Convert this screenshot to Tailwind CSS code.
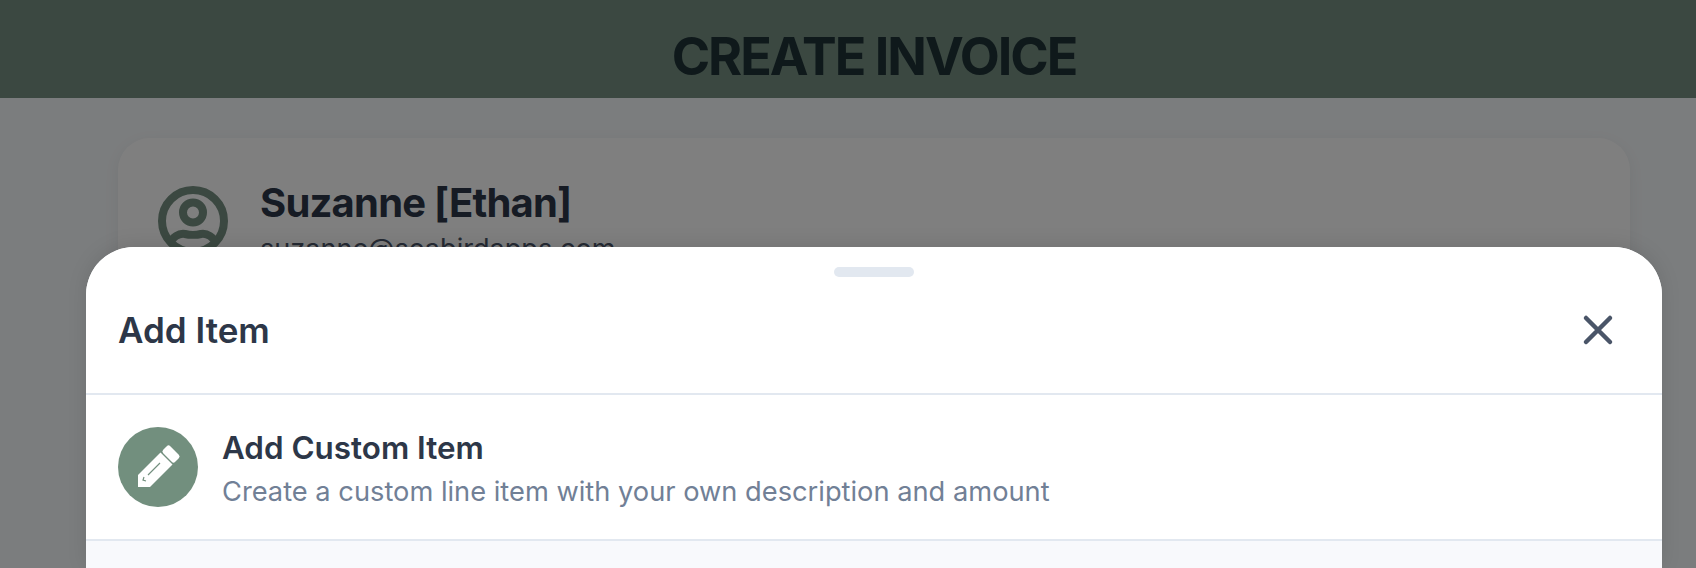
<!DOCTYPE html>
<html>
<head>
<meta charset="utf-8">
<script src="https://cdn.jsdelivr.net/npm/@tailwindcss/browser@4"></script>
</head>
<body class="overflow-hidden bg-[#f7fafc] font-['Inter',sans-serif]">
<div class="relative h-[568px] w-[1748px] overflow-hidden bg-[#f7fafc]">
  <header class="flex h-[98px] items-center justify-center bg-[#769082] pt-[15px]">
    <h1 class="text-[52px] leading-none font-bold tracking-[-2px] text-[#1e3236]">CREATE INVOICE</h1>
  </header>
  <main class="px-[118px] pt-10">
    <section class="flex h-[300px] gap-8 rounded-[32px] bg-white px-10 pt-12 shadow-[0_4px_16px_rgba(0,0,0,0.06)]">
      <svg class="h-[70px] w-[70px] shrink-0" viewBox="0 0 70 70" fill="none" stroke="#769082" stroke-width="8">
        <circle cx="35" cy="35" r="31"/>
        <circle cx="35" cy="26.5" r="10"/>
        <path d="M12 58C14 51 21 47 27 48C31 49 39 49 43 48C49 47 56 51 58 58"/>
      </svg>
      <div class="-mt-[5px]">
        <p class="text-[40px] leading-[44px] font-bold tracking-[-0.8px] text-[#2d3748]">Suzanne [Ethan]</p>
        <p class="mt-[6px] text-[27.1px] leading-9 text-[#4a5568]">suzanne@seabirdapps.com</p>
      </div>
    </section>
  </main>
  <div class="absolute inset-0 bg-black/50"></div>
  <div class="absolute top-[247px] bottom-0 left-[86px] w-[1576px] overflow-hidden rounded-t-[48px] bg-[#f8f9fc] shadow-[0_-2px_20px_rgba(0,0,0,0.1)]">
    <div class="bg-white">
      <div class="flex justify-center pt-5">
        <div class="h-2.5 w-20 rounded-full bg-[#e2e8f0]"></div>
      </div>
      <div class="flex h-[118px] items-center justify-between border-b-2 border-[#e2e8f0] px-8 pb-[10px]">
        <h2 class="text-[35px] leading-10 font-semibold text-[#2d3748]">Add Item</h2>
        <svg class="mr-3 h-10 w-10" viewBox="0 0 40 40" fill="none" stroke="#4a5568" stroke-width="4.5" stroke-linecap="round">
          <path d="M8 8L32 32M32 8L8 32"/>
        </svg>
      </div>
      <div class="flex items-start gap-6 border-b-2 border-[#e2e8f0] p-8">
        <div class="h-20 w-20 shrink-0">
          <svg class="h-20 w-20" viewBox="0 0 80 80">
            <circle cx="40" cy="40" r="40" fill="#728f7e"/>
            <path d="M20 48L42.5 25.5L54.5 37.5L32 60L20 60Z" fill="#fff"/>
            <rect x="-8.5" y="-5" width="17" height="10" rx="2.5" transform="translate(53 27) rotate(45)" fill="#fff"/>
            <path d="M30 48L42 36M26 50L25 53L28 54" fill="none" stroke="#728f7e" stroke-width="1.2"/>
          </svg>
        </div>
        <div class="h-20">
          <p class="text-[31.4px] leading-[42px] font-semibold text-[#2d3748]">Add Custom Item</p>
          <p class="mt-[5px] text-[27.25px] leading-9 text-[#718096]">Create a custom line item with your own description and amount</p>
        </div>
      </div>
    </div>
  </div>
</div>
</body>
</html>
